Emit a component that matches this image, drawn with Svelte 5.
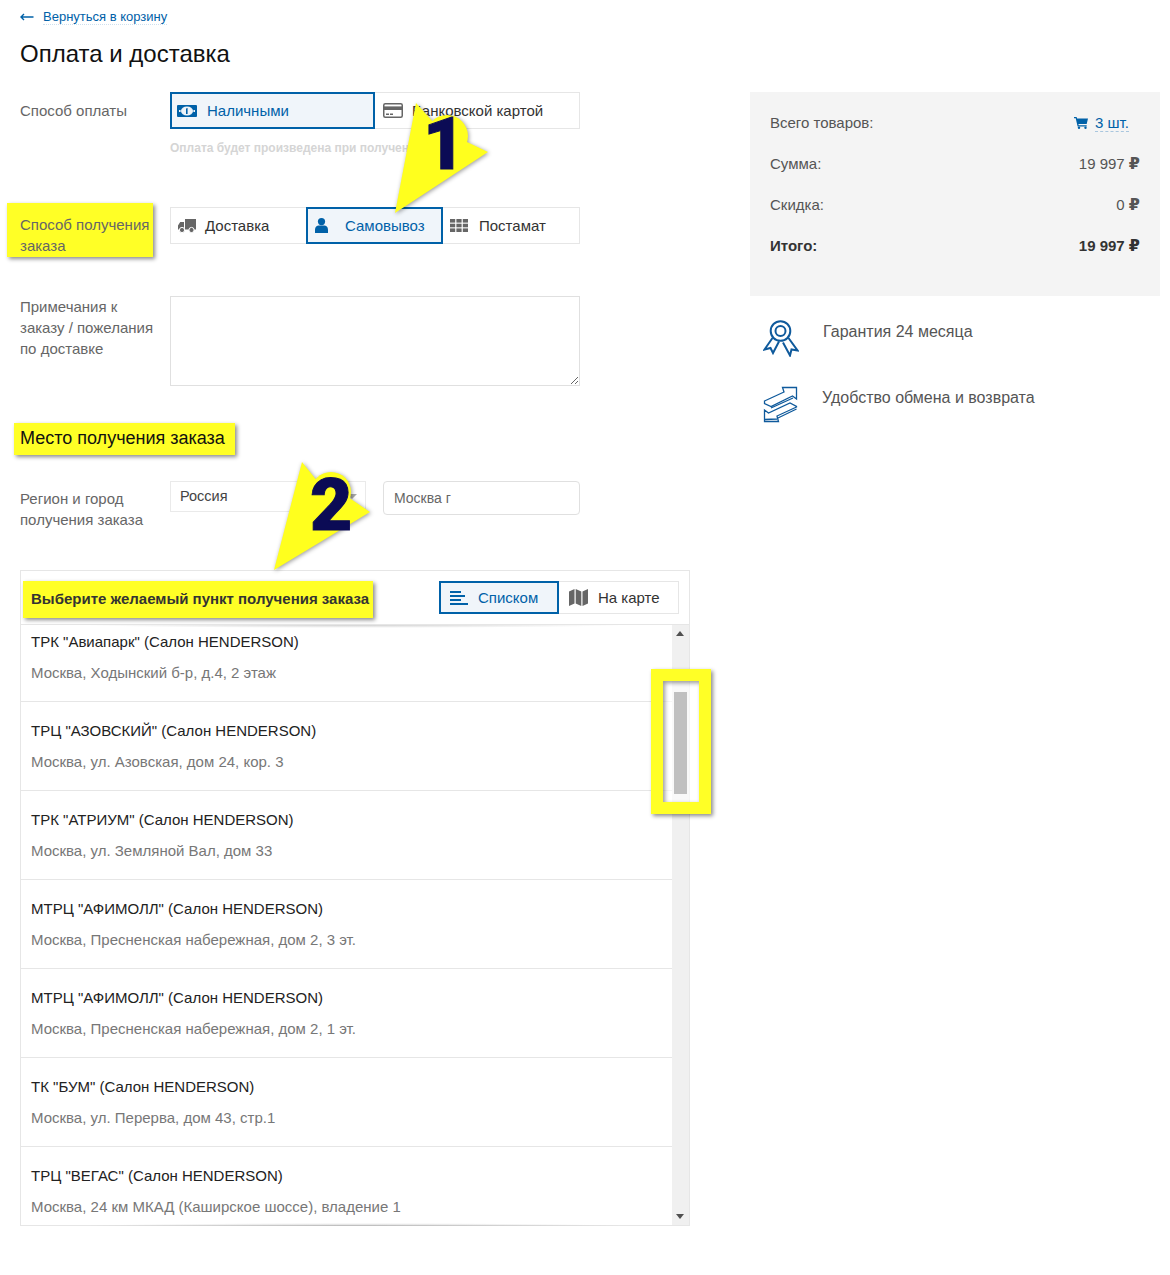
<script>
  const items = [
    ['ТРК "Авиапарк" (Салон HENDERSON)', 'Москва, Ходынский б-р, д.4, 2 этаж'],
    ['ТРЦ "АЗОВСКИЙ" (Салон HENDERSON)', 'Москва, ул. Азовская, дом 24, кор. 3'],
    ['ТРК "АТРИУМ" (Салон HENDERSON)', 'Москва, ул. Земляной Вал, дом 33'],
    ['МТРЦ "АФИМОЛЛ" (Салон HENDERSON)', 'Москва, Пресненская набережная, дом 2, 3 эт.'],
    ['МТРЦ "АФИМОЛЛ" (Салон HENDERSON)', 'Москва, Пресненская набережная, дом 2, 1 эт.'],
    ['ТК "БУМ" (Салон HENDERSON)', 'Москва, ул. Перерва, дом 43, стр.1'],
    ['ТРЦ "ВЕГАС" (Салон HENDERSON)', 'Москва, 24 км МКАД (Каширское шоссе), владение 1']
  ];
</script>

<div class="page">
  <a class="back" href="#back">
    <svg width="14" height="8" viewBox="0 0 14 8"><path d="M13.5 4H1.5M4 1 1 4l3 3" fill="none" stroke="#0061a8" stroke-width="1.4"/></svg>
    <span>Вернуться в корзину</span>
  </a>
  <h1>Оплата и доставка</h1>

  <div class="layout">
    <div class="main">
      <div class="field pay">
        <div class="label">Способ оплаты</div>
        <div class="control">
          <div class="seg">
            <div class="opt active cash">
              <svg width="20" height="12" viewBox="0 0 20 12"><rect width="20" height="12" rx="1" fill="#0061a8"/><ellipse cx="10" cy="6" rx="6" ry="4.6" fill="#eef3f8"/><path d="M9 3.4 10.6 3v6H9z" fill="#0061a8"/><rect x="2" y="5" width="1.6" height="2" fill="#eef3f8"/><rect x="16.4" y="5" width="1.6" height="2" fill="#eef3f8"/></svg>
              <span>Наличными</span>
            </div>
            <div class="opt card">
              <svg width="20" height="15" viewBox="0 0 20 15"><rect x=".75" y=".75" width="18.5" height="13.5" rx="1.5" fill="#fff" stroke="#666" stroke-width="1.5"/><rect x="1" y="3.4" width="18" height="3.6" fill="#666"/><rect x="3" y="10.5" width="3" height="1.5" fill="#666"/><rect x="7" y="10.5" width="3" height="1.5" fill="#666"/></svg>
              <span>Банковской картой</span>
            </div>
          </div>
          <p class="hint">Оплата будет произведена при получении заказа</p>
        </div>
      </div>

      <div class="field receive">
        <div class="label marked">Способ получения заказа</div>
        <div class="control">
          <div class="seg">
            <div class="opt delivery">
              <svg width="18" height="14" viewBox="0 0 18 14"><path d="M7 0h11v10.5H7zM0 6.5 2.2 3H6v7.500H0z" fill="#666"/><circle cx="4" cy="11" r="2.6" fill="#666" stroke="#fff"/><circle cx="13.5" cy="11" r="2.6" fill="#666" stroke="#fff"/></svg>
              <span>Доставка</span>
            </div>
            <div class="opt active pickup">
              <svg width="13" height="15" viewBox="0 0 13 15"><circle cx="6.5" cy="3.6" r="3.6" fill="#0061a8"/><path d="M0 15v-3.5C0 8.8 2 7.4 3.6 7.4h5.8c1.6 0 3.6 1.400 3.600 4.100V15z" fill="#0061a8"/></svg>
              <span>Самовывоз</span>
            </div>
            <div class="opt locker">
              <svg width="18" height="13" viewBox="0 0 18 13" fill="#666"><rect width="5.2" height="3.6"/><rect x="6.4" width="5.2" height="3.6"/><rect x="12.8" width="5.2" height="3.6"/><rect y="4.7" width="5.2" height="3.6"/><rect x="6.4" y="4.7" width="5.2" height="3.6"/><rect x="12.8" y="4.7" width="5.2" height="3.6"/><rect y="9.4" width="5.2" height="3.6"/><rect x="6.4" y="9.4" width="5.2" height="3.6"/><rect x="12.8" y="9.4" width="5.2" height="3.6"/></svg>
              <span>Постамат</span>
            </div>
          </div>
        </div>
      </div>

      <div class="field notes">
        <div class="label">Примечания к заказу / пожелания по доставке</div>
        <div class="control"><textarea aria-label="Примечания"></textarea></div>
      </div>

      <h2><span>Место получения заказа</span></h2>

      <div class="field region">
        <div class="label">Регион и город получения заказа</div>
        <div class="select">Россия<i></i></div>
        <div class="city">Москва г</div>
      </div>

      <section class="panel">
        <header>
          <div class="panel-title">Выберите желаемый пункт получения заказа</div>
          <div class="tabs">
            <div class="tab active list-tab">
              <svg width="18" height="14" viewBox="0 0 18 14" fill="#0061a8"><rect width="11" height="2"/><rect y="4" width="15" height="2"/><rect y="8" width="11" height="2"/><rect y="12" width="18" height="2"/></svg>
              <span>Списком</span>
            </div>
            <div class="tab map-tab">
              <svg width="19" height="17" viewBox="0 0 19 17" fill="#666"><path d="M0 2.5 5.5 0v14.5L0 17zM6.7 0l5.6 2.5V17l-5.6-2.5zM13.500 2.500 19 0v14.500L13.500 17z"/></svg>
              <span>На карте</span>
            </div>
          </div>
        </header>
        <div class="body">
          <ul>
            {#each items as [name, addr]}
              <li><div class="name">{name}</div><div class="addr">{addr}</div></li>
            {/each}
          </ul>
          <div class="scrollbar">
            <span class="up"></span>
            <div class="thumb"></div>
            <span class="down"></span>
          </div>
          <div class="scroll-mark"></div>
        </div>
      </section>
    </div>

    <aside>
      <div class="summary">
        <div class="line"><span>Всего товаров:</span>
          <span class="qty">
            <svg width="14" height="12" viewBox="0 0 14 12" fill="#0061a8"><path d="M0 0h2.600l.5 1.500H14l-1.300 5.500H4.400l.3 1.200h8v1.200H3.600L1.700 1.200H0z"/><circle cx="5" cy="10.800" r="1.200"/><circle cx="11.500" cy="10.800" r="1.200"/></svg>
            <u>3 шт.</u>
          </span>
        </div>
        <div class="line"><span>Сумма:</span><span>19 997 <b>₽</b></span></div>
        <div class="line"><span>Скидка:</span><span>0 <b>₽</b></span></div>
        <div class="line total"><span>Итого:</span><span>19 997 <b>₽</b></span></div>
      </div>
      <div class="perks">
        <div class="perk">
          <svg width="36" height="37" viewBox="0 0 36 37" fill="none" stroke="#0f5a9c" stroke-width="2"><circle cx="17.500" cy="11" r="9.800"/><circle cx="17.500" cy="11" r="5"/><path d="M9.500 18 1.500 29.500l6-1.500 2.500 5 6-11.500M25.500 18l9 12.500-6-1-1.500 6-7-13"/></svg>
          <span>Гарантия 24 месяца</span>
        </div>
        <div class="perk">
          <svg width="35" height="37" viewBox="0 0 35 37" fill="none" stroke="#0f5a9c" stroke-width="1.300"><path d="M1.500 15 21 6l-1.500-4.500H33.500V13l-4-3L8 20.500l-6.500-3zM8 22l22-10M33.500 21 14 30l1.500 5.500H1.500V24l4 3 21.500-10 6.500 3.500zM1.500 33.500 14 33M33.500 23 15 32"/></svg>
          <span>Удобство обмена и возврата</span>
        </div>
      </div>
    </aside>
  </div>

  <svg class="arrows" width="1170" height="1275" viewBox="0 0 1170 1275">
    <g class="arrow">
      <polygon points="416,103 435,124 467,142 488,152 395,213"/>
      <circle cx="447" cy="136" r="21"/>
    </g>
    <text x="423" y="169" class="num">1</text>
    <g class="arrow">
      <polygon points="302,462 318,482 348,497 370,512 274,570"/>
      <circle cx="331" cy="492" r="20"/>
    </g>
    <text x="310" y="530" class="num">2</text>
  </svg>
</div>

<style>
  :global(body) { margin: 0; background: #fff; }
  .page { position: relative; width: 1170px; height: 1275px; overflow: hidden; font-family: "Liberation Sans", Arial, sans-serif; font-size: 15px; color: #333; }
  .back { display: flex; align-items: center; gap: 9px; padding: 8px 0 0 20px; height: 18px; font-size: 13px; color: #0061a8; text-decoration: none; }
  .back span { border-bottom: 1px dotted #cfe0ee; line-height: 15px; }
  h1 { margin: 11px 0 21px 20px; font-size: 24px; line-height: 34px; font-weight: 400; color: #111; }
  .layout { display: flex; align-items: flex-start; }
  .main { width: 670px; margin-left: 20px; flex: none; }
  aside { width: 410px; margin-left: 60px; flex: none; }

  .field { display: flex; }
  .label { width: 150px; flex: none; box-sizing: border-box; padding: 8px 14px 0 0; line-height: 21px; color: #666; }
  .control { width: 410px; flex: none; }
  .pay { margin-bottom: 50px; }
  .receive { margin-bottom: 52px; height: 37px; }
  .seg { display: flex; height: 37px; box-sizing: border-box; }
  .opt { display: flex; align-items: center; box-sizing: border-box; height: 37px; border: 1px solid #e6e6e6; margin-left: -1px; color: #333; }
  .opt:first-child { margin-left: 0; }
  .active { border: 2px solid #0061a8; background: #f0f5fa; color: #0061a8; position: relative; }
  .cash { width: 205px; padding-left: 5px; gap: 10px; }
  .card { width: 206px; padding-left: 8px; gap: 9px; }
  .delivery { width: 137px; padding-left: 7px; gap: 9px; }
  .pickup { width: 137px; padding-left: 7px; gap: 17px; }
  .locker { width: 138px; padding-left: 7px; gap: 11px; }
  .hint { margin: 11px 0 0; font-size: 12px; line-height: 17px; font-weight: 700; color: #d5d5d5; }
  .marked { width: 146px; margin: -4px 17px 0 -13px; height: 54px; padding: 11px 0 0 13px; background: #ffff26; box-shadow: 2px 2px 4px rgba(0,0,0,.45); }
  .notes { margin-bottom: 37px; }
  .notes .label { padding-top: 0; }
  textarea { display: block; width: 410px; height: 90px; box-sizing: border-box; border: 1px solid #e0e0e0; margin: 0; padding: 6px; background: #fff; font: inherit; }
  h2 { margin: 0 0 26px; font-size: 18px; line-height: 30px; font-weight: 400; height: 32px; color: #111; }
  h2 span { display: inline-block; margin-left: -6px; padding: 0 10px 2px 6px; background: #ffff26; box-shadow: 2px 2px 4px rgba(0,0,0,.45); }
  .region { margin-bottom: 40px; align-items: flex-start; }
  .region .label { padding-top: 7px; }
  .select { width: 196px; height: 31px; box-sizing: border-box; border: 1px solid #eaeaea; padding: 0 9px; line-height: 28px; font-size: 14.5px; color: #444; position: relative; }
  .select i { position: absolute; right: 8px; top: 12px; border: 5px solid transparent; border-top-color: #aaa; border-bottom: 0; }
  .city { width: 197px; height: 34px; box-sizing: border-box; margin-left: 17px; border: 1px solid #e0e0e0; border-radius: 4px; padding: 0 10px; line-height: 33px; font-size: 14px; color: #666; }

  .panel { width: 670px; height: 656px; box-sizing: border-box; border: 1px solid #e6e6e6; position: relative; }
  .panel header { display: flex; justify-content: space-between; align-items: flex-start; height: 54px; box-sizing: border-box; padding: 10px 10px 0 2px; border-bottom: 1px solid #e6e6e6; position: relative; }
  .panel header::after { content: ""; position: absolute; left: 60px; right: 60px; bottom: -4px; height: 3px; background: radial-gradient(ellipse at top, rgba(0,0,0,.18), transparent 70%); z-index: 1; }
  .panel-title { height: 37px; box-sizing: border-box; padding: 0 4px 0 8px; line-height: 35px; font-size: 15px; font-weight: 700; white-space: nowrap; background: #ffff26; box-shadow: 2px 2px 4px rgba(0,0,0,.45); }
  .tabs { display: flex; height: 33px; }
  .tab { display: flex; align-items: center; height: 33px; box-sizing: border-box; border: 1px solid #e6e6e6; }
  .tab.active { border: 2px solid #0061a8; }
  .list-tab { width: 120px; padding-left: 9px; gap: 10px; }
  .map-tab { width: 120px; margin-left: 0; border-left: 0; padding-left: 10px; gap: 10px; }
  .body { display: flex; height: 600px; position: relative; }
  .body::after { content: ""; position: absolute; left: 60px; right: 60px; bottom: -1px; height: 3px; background: radial-gradient(ellipse at bottom, rgba(0,0,0,.2), transparent 70%); }
  ul { list-style: none; margin: 0; padding: 0; flex: 1; overflow: hidden; height: 600px; }
  li { height: 89px; box-sizing: border-box; padding: 18px 0 0 10px; border-bottom: 1px solid #e6e6e6; }
  li:first-child { height: 77px; padding-top: 6px; }
  .name { line-height: 22px; color: #222; }
  .addr { margin-top: 9px; line-height: 22px; color: #777; }
  .scrollbar { width: 17px; flex: none; background: #f0f0f0; position: relative; box-sizing: border-box; padding: 67px 2px 0; }
  .thumb { width: 13px; height: 102px; background: #c0c0c0; position: relative; z-index: 2; }
  .up, .down { position: absolute; left: 4px; border: 4px solid transparent; border-top: 0; border-bottom: 5px solid #505050; }
  .up { top: 6px; }
  .down { bottom: 6px; border-bottom: 0; border-top: 5px solid #505050; }
  .scroll-mark { position: absolute; left: 630px; top: 44px; width: 60px; height: 145px; box-sizing: border-box; border: 12px solid #ffff26; background: rgba(255,255,255,.6); box-shadow: 2px 2px 4px rgba(0,0,0,.45), inset 2px 2px 4px rgba(0,0,0,.4); }

  .summary { height: 204px; box-sizing: border-box; background: #f4f4f4; padding: 10px 20px 30px 20px; }
  .line { display: flex; justify-content: space-between; align-items: center; height: 41px; color: #555; }
  .line b { font-family: "DejaVu Sans", sans-serif; font-size: 16px; line-height: 1; font-weight: 700; }
  .total { font-weight: 700; color: #333; }
  .qty { display: flex; align-items: center; gap: 7px; color: #0061a8; padding-right: 11px; }
  .qty u { text-decoration: none; border-bottom: 1px dashed #a9c6de; line-height: 17px; }
  .perks { display: flex; flex-direction: column; gap: 29px; padding: 24px 0 0 13px; }
  .perk { display: flex; align-items: center; gap: 24px; height: 37px; color: #555; }
  .perk span { margin-bottom: 13px; font-size: 16px; }
  .perk svg { flex: none; }

  .arrows { position: absolute; left: 0; top: 0; pointer-events: none; }
  .arrow { fill: #ffff1e; filter: drop-shadow(1px 1px 2px rgba(0,0,0,.4)); }
  .num { font-family: Roboto, "Liberation Sans", sans-serif; font-weight: 900; font-size: 73px; fill: #0b0b55; stroke: #0b0b55; stroke-width: 1px; }
</style>
